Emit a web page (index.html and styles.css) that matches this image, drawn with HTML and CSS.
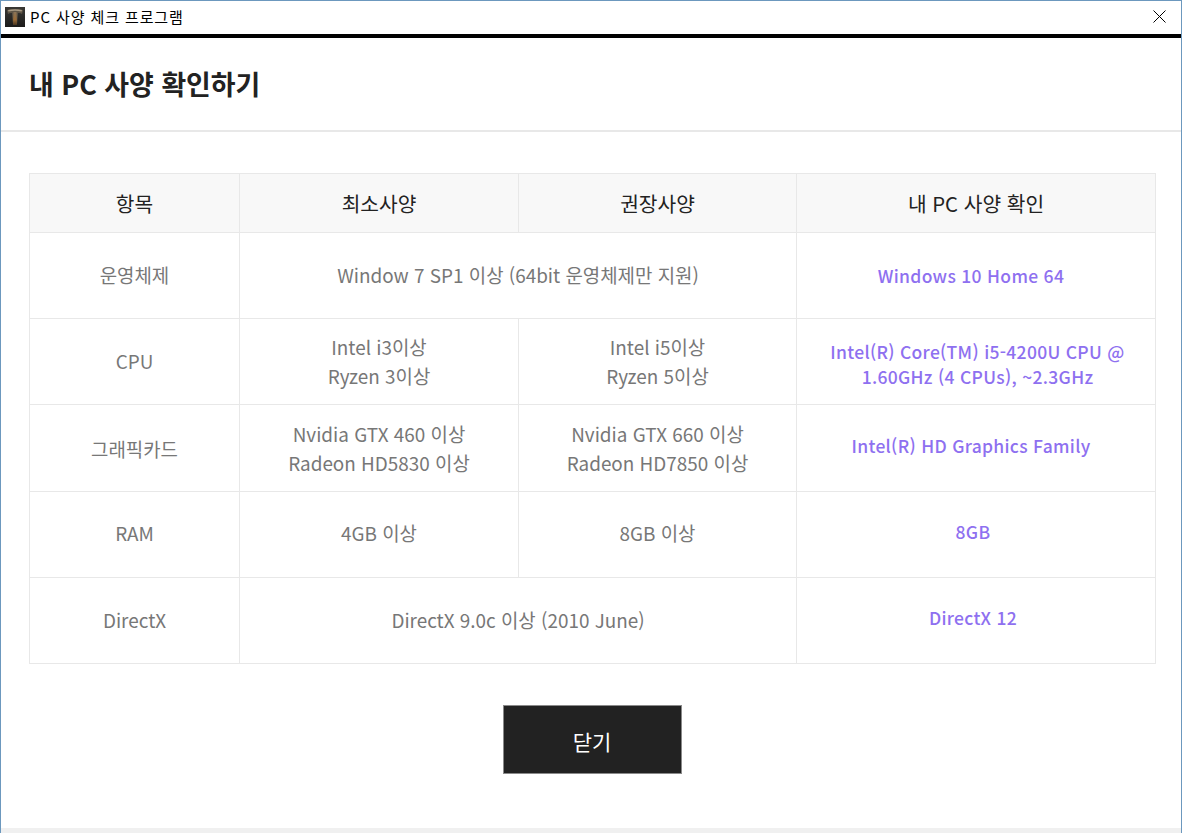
FILE: index.html
```html
<!DOCTYPE html>
<html lang="ko">
<head>
  <meta charset="UTF-8">
  <title>PC 사양 체크 프로그램</title>
  <link rel="stylesheet" href="styles.css">
</head>
<body>
  <div class="window">
    <div class="titlebar">
      <div class="title-left">
        <svg class="app-icon" width="20" height="20" viewBox="0 0 20 20">
          <defs>
            <linearGradient id="bg" x1="0" y1="0" x2="0" y2="1">
              <stop offset="0" stop-color="#3a3834"/>
              <stop offset="1" stop-color="#1c1b1a"/>
            </linearGradient>
            <linearGradient id="pillar" x1="0" y1="0" x2="0" y2="1">
              <stop offset="0" stop-color="#8a7458"/>
              <stop offset="0.6" stop-color="#9a6a35"/>
              <stop offset="1" stop-color="#4a3520"/>
            </linearGradient>
          </defs>
          <rect width="20" height="20" fill="url(#bg)"/>
          <path d="M2 3q8-2 16 0l-1 4q-2-1.500-4-1l-1 11H8L7 6q-2-.5-4 1z" fill="#5f5546"/>
          <path d="M8.500 5h3l.5 13H8z" fill="url(#pillar)"/>
          <path d="M3 3q7-1.500 14 0l-.5 1.500q-6.500-1.500-13 0z" fill="#a89a84"/>
        </svg>
        <span class="title-text">PC 사양 체크 프로그램</span>
      </div>
      <svg class="close-icon" width="13" height="13" viewBox="0 0 13 13">
        <path d="M.5.5l12 12M12.500.5l-12 12" stroke="#000" stroke-width="1" fill="none"/>
      </svg>
    </div>

    <header class="page-header">
      <h1>내 PC 사양 확인하기</h1>
    </header>

    <main class="content">
      <table class="spec-table">
        <colgroup>
          <col class="col-item">
          <col class="col-spec">
          <col class="col-rec">
          <col class="col-mine">
        </colgroup>
        <thead>
          <tr>
            <th>항목</th>
            <th>최소사양</th>
            <th>권장사양</th>
            <th>내 PC 사양 확인</th>
          </tr>
        </thead>
        <tbody>
          <tr>
            <td>운영체제</td>
            <td colspan="2">Window 7 SP1 이상 (64bit 운영체제만 지원)</td>
            <td class="mine mine-low">Windows 10 Home 64</td>
          </tr>
          <tr>
            <td>CPU</td>
            <td>Intel i3이상<br>Ryzen 3이상</td>
            <td>Intel i5이상<br>Ryzen 5이상</td>
            <td class="mine mine-cpu">Intel(R) Core(TM) i5-4200U CPU @<br>1.60GHz (4 CPUs), ~2.3GHz</td>
          </tr>
          <tr class="row-tall">
            <td>그래픽카드</td>
            <td>Nvidia GTX 460 이상<br>Radeon HD5830 이상</td>
            <td>Nvidia GTX 660 이상<br>Radeon HD7850 이상</td>
            <td class="mine mine-mid">Intel(R) HD Graphics Family</td>
          </tr>
          <tr class="row-ram">
            <td>RAM</td>
            <td>4GB 이상</td>
            <td>8GB 이상</td>
            <td class="mine">8GB</td>
          </tr>
          <tr>
            <td>DirectX</td>
            <td colspan="2">DirectX 9.0c 이상 (2010 June)</td>
            <td class="mine">DirectX 12</td>
          </tr>
        </tbody>
      </table>

      <div class="actions">
        <button class="close-btn">닫기</button>
      </div>
    </main>

    <div class="bottom-strip"></div>
  </div>
</body>
</html>
```

FILE: styles.css
```css
/* Global Styles */
* {
  margin: 0;
  padding: 0;
  box-sizing: border-box;
}

html, body {
  height: 100%;
  overflow: hidden;
}

body {
  background: #fff;
  color: #222;
  font-family: "Noto Sans CJK KR", "Noto Sans", sans-serif;
}

.window {
  display: flex;
  flex-direction: column;
  height: 833px;
  border: 1px solid #6c98be;
  border-bottom: none;
}

/* Title Bar */
.titlebar {
  display: flex;
  justify-content: space-between;
  align-items: center;
  height: 33px;
  padding: 0 15px 2px 4px;
  background: #fff;
  flex-shrink: 0;
}

.title-left {
  display: flex;
  align-items: center;
  gap: 5px;
}

.title-text {
  color: #000;
  font-size: 15px;
  letter-spacing: 0.9px;
}

/* Page Header */
.page-header {
  display: flex;
  align-items: center;
  height: 98px;
  padding: 0 28px 2px;
  border-top: 4px solid #000;
  border-bottom: 2px solid #e8e8e8;
  flex-shrink: 0;
}

.page-header h1 {
  font-size: 26.9px;
  font-weight: 700;
  color: #222;
}

/* Table */
.content {
  flex: 1;
  padding: 41px 25px 0 28px;
}

.spec-table {
  width: 1126px;
  table-layout: fixed;
  border-collapse: collapse;
  border: 1px solid #e8e8e8;
}

.col-item { width: 210px; }
.col-spec { width: 279px; }
.col-rec { width: 278px; }
.col-mine { width: 359px; }

.spec-table th,
.spec-table td {
  border: 1px solid #e8e8e8;
  text-align: center;
  vertical-align: middle;
}

.spec-table th {
  height: 59px;
  background: #f8f8f8;
  color: #222;
  font-size: 20.3px;
  font-weight: 400;
}

.spec-table td {
  height: 86px;
  padding-bottom: 2px;
  color: #777;
  font-size: 18.9px;
  line-height: 29px;
}

.spec-table .row-tall td {
  height: 87px;
  padding-bottom: 0;
}

.spec-table .row-ram td {
  padding-bottom: 4px;
}

.spec-table td.mine {
  color: #8e70f0;
  font-size: 17.5px;
  font-weight: 500;
  line-height: 25px;
  letter-spacing: 0.3px;
  padding: 0 6px 7px 0;
}

.spec-table td.mine-low {
  padding: 0 10px 0 0;
}

.spec-table td.mine-mid {
  padding: 0 10px 5px 0;
}

.spec-table td.mine-cpu {
  padding: 5px 0 0 3px;
}

/* Close Button */
.actions {
  display: flex;
  justify-content: center;
  padding: 41px 1px 0 0;
}

.close-btn {
  width: 179px;
  height: 69px;
  padding-top: 2px;
  border: 1px solid #8a8a8a;
  background: #222;
  color: #fff;
  font-family: inherit;
  font-size: 21px;
}

.bottom-strip {
  height: 5px;
  background: #f0f0f0;
  flex-shrink: 0;
}
```
